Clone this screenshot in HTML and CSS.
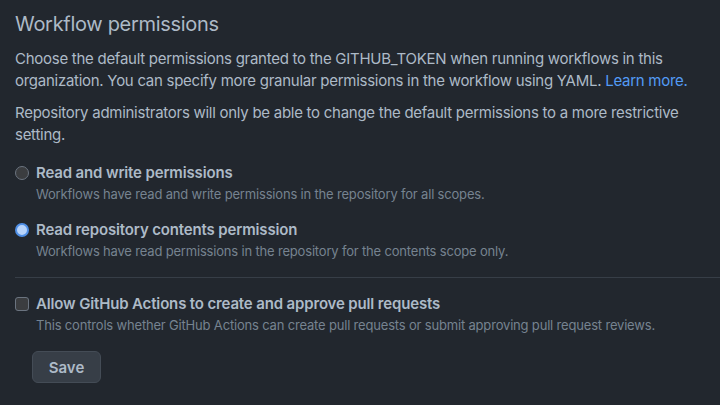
FILE: index.html
```html
<!DOCTYPE html>
<html lang="en">
<head>
<meta charset="utf-8">
<link rel="stylesheet" href="styles.css">
</head>
<body>
<main class="page">
  <h2 class="title">Workflow permissions</h2>
  <p class="text p1">Choose the default permissions granted to the GITHUB_TOKEN when running workflows in this organization. You can specify more granular permissions in the workflow using YAML. <a class="link" href="#">Learn more.</a></p>
  <p class="text p2">Repository administrators will only be able to change the default permissions to a more restrictive setting.</p>

  <div class="option opt1">
    <span class="radio"></span>
    <div class="label">Read and write permissions</div>
    <div class="desc">Workflows have read and write permissions in the repository for all scopes.</div>
  </div>
  <div class="option opt2">
    <span class="radio checked"></span>
    <div class="label">Read repository contents permission</div>
    <div class="desc">Workflows have read permissions in the repository for the contents scope only.</div>
  </div>

  <hr class="divider">

  <div class="option opt3">
    <span class="check"></span>
    <div class="label">Allow GitHub Actions to create and approve pull requests</div>
    <div class="desc">This controls whether GitHub Actions can create pull requests or submit approving pull request reviews.</div>
  </div>

  <button class="btn">Save</button>
</main>
</body>
</html>
```

FILE: styles.css
```css
html, body {
  margin: 0;
  padding: 0;
  background: #22272e;
  width: 720px;
  height: 405px;
  overflow: hidden;
}
.page {
  padding: 8px 0 0 15px;
  font-family: Inter, "Liberation Sans", sans-serif;
  color: #adbac7;
  -webkit-font-smoothing: antialiased;
}
.title {
  margin: 0 0 8px;
  font-size: 20px;
  line-height: 32px;
  font-weight: 400;
  letter-spacing: -0.3px;
  color: #adbac7;
}
.text {
  margin: 0;
  font-size: 15px;
  line-height: 22px;
  letter-spacing: -0.27px;
  width: 690px;
}
.p2 {
  margin-top: 10px;
}
.link {
  color: #539bf5;
  text-decoration: none;
}
.option {
  display: grid;
  grid-template-columns: 14px 1fr;
  column-gap: 7px;
  align-items: center;
}
.opt1 { margin-top: 16px; }
.opt2 { margin-top: 15px; }
.opt3 { margin-top: 15px; }
.label {
  grid-column: 2;
  grid-row: 1;
  font-size: 15px;
  line-height: 22px;
  font-weight: 600;
  letter-spacing: -0.15px;
  color: #adbac7;
}
.desc {
  grid-column: 2;
  grid-row: 2;
  font-size: 13px;
  line-height: 20px;
  letter-spacing: -0.18px;
  color: #768390;
}
.radio, .check {
  grid-column: 1;
  grid-row: 1;
  box-sizing: border-box;
  width: 14px;
  height: 14px;
  border: 1px solid #6b7480;
  background: #3b3d40;
}
.radio {
  border-radius: 50%;
}
.radio.checked {
  border: 2px solid #4f8fe6;
  background: #b8d4fb;
}
.check {
  border-radius: 3px;
}
.divider {
  margin: 16px 0 0;
  border: 0;
  border-top: 1px solid #373e47;
}
.btn {
  display: block;
  margin: 16px 0 0 17px;
  width: 69px;
  height: 32px;
  box-sizing: border-box;
  background: #373e47;
  border: 1px solid #444c56;
  border-radius: 6px;
  color: #adbac7;
  font-family: Inter, "Liberation Sans", sans-serif;
  font-size: 15px;
  font-weight: 600;
  padding: 0;
}
```
